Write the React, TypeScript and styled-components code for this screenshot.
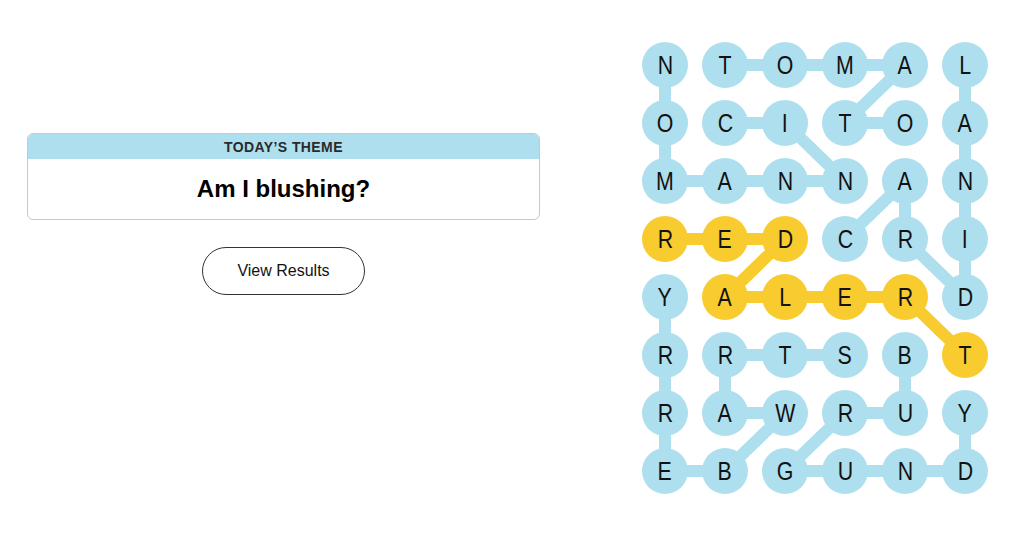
import React from "react";
import styled, { createGlobalStyle } from "styled-components";

const GlobalStyle = createGlobalStyle`
    html, body {
        margin: 0;
        padding: 0;
        background: #fff;
        font-family: "Liberation Sans", Arial, sans-serif;
        color: #121212;
    }
`;

const BLUE = "#aedfee";
const YELLOW = "#f8cb2e";
const CELL = 46;
const COL_STEP = 60;
const ROW_STEP = 58;

const LETTERS = [
    "NTOMAL",
    "OCITOA",
    "MANNAN",
    "REDCRI",
    "YALERD",
    "RRTSBT",
    "RAWRUY",
    "EBGUND",
];

type Word = { path: [number, number][]; spangram?: boolean };

const WORDS: Word[] = [
    { path: [[1, 1], [1, 2], [2, 3], [2, 2], [2, 1], [2, 0], [1, 0], [0, 0]] },
    { path: [[0, 1], [0, 2], [0, 3], [0, 4], [1, 3], [1, 4]] },
    { path: [[3, 3], [2, 4], [3, 4], [4, 5], [3, 5], [2, 5], [1, 5], [0, 5]] },
    { path: [[3, 0], [3, 1], [3, 2], [4, 1], [4, 2], [4, 3], [4, 4], [5, 5]], spangram: true },
    { path: [[5, 3], [5, 2], [5, 1], [6, 1], [6, 2], [7, 1], [7, 0], [6, 0], [5, 0], [4, 0]] },
    { path: [[5, 4], [6, 4], [6, 3], [7, 2], [7, 3], [7, 4], [7, 5], [6, 5]] },
];

const spangramCells = new Set(
    WORDS.filter(w => w.spangram).flatMap(w => w.path.map(([r, c]) => `${r}-${c}`))
);

const App = () => {
    return (
        <Page>
            <GlobalStyle />
            <Side>
                <ThemeCard>
                    <ThemeLabel>Today’s Theme</ThemeLabel>
                    <ThemeText>Am I blushing?</ThemeText>
                </ThemeCard>
                <ResultsButton>View Results</ResultsButton>
            </Side>
            <Board>
                <Links width={CELL + COL_STEP * 5} height={CELL + ROW_STEP * 7}>
                    {WORDS.map((w, i) => (
                        <polyline
                            key={i}
                            points={w.path
                                .map(([r, c]) => `${CELL / 2 + c * COL_STEP},${CELL / 2 + r * ROW_STEP}`)
                                .join(" ")}
                            fill="none"
                            stroke={w.spangram ? YELLOW : BLUE}
                            strokeWidth={12}
                            strokeLinecap="round"
                            strokeLinejoin="round"
                        />
                    ))}
                </Links>
                {LETTERS.map((row, r) =>
                    row.split("").map((ch, c) => (
                        <Tile key={`${r}-${c}`} $gold={spangramCells.has(`${r}-${c}`)}>
                            <span>{ch}</span>
                        </Tile>
                    ))
                )}
            </Board>
        </Page>
    );
};

const Page = styled.div`
    display: flex;
    align-items: flex-start;
    padding: 42px 0 0 27px;
    width: 1024px;
    height: 549px;
    box-sizing: border-box;
`;

const Side = styled.div`
    width: 513px;
    margin-top: 91px;
    display: flex;
    flex-direction: column;
    align-items: center;
`;

const ThemeCard = styled.div`
    width: 100%;
    border: 1px solid #c8c8c8;
    border-radius: 6px;
    overflow: hidden;
    box-sizing: border-box;
`;

const ThemeLabel = styled.div`
    height: 25px;
    line-height: 26px;
    background: ${BLUE};
    text-align: center;
    text-transform: uppercase;
    font-size: 14px;
    font-weight: 700;
    letter-spacing: 0.4px;
    color: #2a2a2a;
`;

const ThemeText = styled.div`
    height: 60px;
    display: flex;
    align-items: center;
    justify-content: center;
    font-size: 24px;
    font-weight: 700;
    color: #000;
`;

const ResultsButton = styled.button`
    margin-top: 27px;
    width: 163px;
    height: 48px;
    border: 1px solid #333;
    border-radius: 24px;
    background: #fff;
    font-family: "Liberation Sans", Arial, sans-serif;
    font-size: 16px;
    color: #121212;
    cursor: pointer;
`;

const Board = styled.div`
    position: relative;
    margin-left: 102px;
    display: grid;
    grid-template-columns: repeat(6, ${CELL}px);
    grid-auto-rows: ${CELL}px;
    column-gap: ${COL_STEP - CELL}px;
    row-gap: ${ROW_STEP - CELL}px;
`;

const Links = styled.svg`
    position: absolute;
    top: 0;
    left: 0;
`;

const Tile = styled.div<{ $gold: boolean }>`
    position: relative;
    width: ${CELL}px;
    height: ${CELL}px;
    border-radius: 50%;
    background: ${p => (p.$gold ? YELLOW : BLUE)};
    display: flex;
    align-items: center;
    justify-content: center;
    font-family: "Liberation Sans Narrow", "Liberation Sans", Arial, sans-serif;
    font-size: 26px;
    color: #121212;
    span {
        display: inline-block;
        transform: scaleX(0.82);
        line-height: 1;
    }
`;

export default App;
